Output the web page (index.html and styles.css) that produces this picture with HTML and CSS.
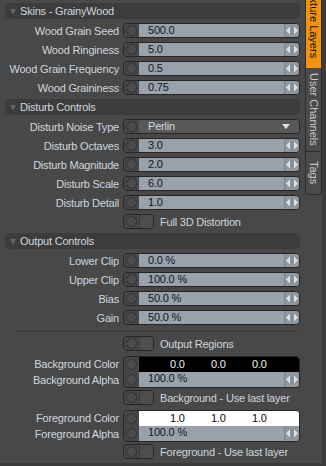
FILE: index.html
```html
<!DOCTYPE html>
<html lang="en">
<head>
    <meta charset="UTF-8">
    <title>Skins - GrainyWood</title>
    <link rel="stylesheet" href="styles.css">
</head>
<body>
    <div class="window">
        <div class="panel">
            <!-- Skins -->
            <div class="group-head"><span class="caret"></span>Skins - GrainyWood</div>
            <div class="row">
                <span class="label">Wood Grain Seed</span>
                <div class="field"><span class="knob"><i></i></span><span class="value">500.0</span><span class="spin"><svg width="12" height="9" viewBox="0 0 12 9"><polygon points="0,4.5 4,0.5 4,8.5"/><rect x="5.5" y="0" width="1" height="9" class="bar"/><polygon points="8,0.5 12,4.5 8,8.5"/></svg></span></div>
            </div>
            <div class="row">
                <span class="label">Wood Ringiness</span>
                <div class="field"><span class="knob"><i></i></span><span class="value">5.0</span><span class="spin"><svg width="12" height="9" viewBox="0 0 12 9"><polygon points="0,4.5 4,0.5 4,8.5"/><rect x="5.5" y="0" width="1" height="9" class="bar"/><polygon points="8,0.5 12,4.5 8,8.5"/></svg></span></div>
            </div>
            <div class="row">
                <span class="label">Wood Grain Frequency</span>
                <div class="field"><span class="knob"><i></i></span><span class="value">0.5</span><span class="spin"><svg width="12" height="9" viewBox="0 0 12 9"><polygon points="0,4.5 4,0.5 4,8.5"/><rect x="5.5" y="0" width="1" height="9" class="bar"/><polygon points="8,0.5 12,4.5 8,8.5"/></svg></span></div>
            </div>
            <div class="row">
                <span class="label">Wood Graininess</span>
                <div class="field"><span class="knob"><i></i></span><span class="value">0.75</span><span class="spin"><svg width="12" height="9" viewBox="0 0 12 9"><polygon points="0,4.5 4,0.5 4,8.5"/><rect x="5.5" y="0" width="1" height="9" class="bar"/><polygon points="8,0.5 12,4.5 8,8.5"/></svg></span></div>
            </div>

            <!-- Disturb -->
            <div class="group-head"><span class="caret"></span>Disturb Controls</div>
            <div class="row">
                <span class="label">Disturb Noise Type</span>
                <div class="field dropdown"><span class="knob"><i></i></span><span class="value">Perlin</span><span class="drop-arrow"></span></div>
            </div>
            <div class="row">
                <span class="label">Disturb Octaves</span>
                <div class="field"><span class="knob"><i></i></span><span class="value">3.0</span><span class="spin"><svg width="12" height="9" viewBox="0 0 12 9"><polygon points="0,4.5 4,0.5 4,8.5"/><rect x="5.5" y="0" width="1" height="9" class="bar"/><polygon points="8,0.5 12,4.5 8,8.5"/></svg></span></div>
            </div>
            <div class="row">
                <span class="label">Disturb Magnitude</span>
                <div class="field"><span class="knob"><i></i></span><span class="value">2.0</span><span class="spin"><svg width="12" height="9" viewBox="0 0 12 9"><polygon points="0,4.5 4,0.5 4,8.5"/><rect x="5.5" y="0" width="1" height="9" class="bar"/><polygon points="8,0.5 12,4.5 8,8.5"/></svg></span></div>
            </div>
            <div class="row">
                <span class="label">Disturb Scale</span>
                <div class="field"><span class="knob"><i></i></span><span class="value">6.0</span><span class="spin"><svg width="12" height="9" viewBox="0 0 12 9"><polygon points="0,4.5 4,0.5 4,8.5"/><rect x="5.5" y="0" width="1" height="9" class="bar"/><polygon points="8,0.5 12,4.5 8,8.5"/></svg></span></div>
            </div>
            <div class="row">
                <span class="label">Disturb Detail</span>
                <div class="field"><span class="knob"><i></i></span><span class="value">1.0</span><span class="spin"><svg width="12" height="9" viewBox="0 0 12 9"><polygon points="0,4.5 4,0.5 4,8.5"/><rect x="5.5" y="0" width="1" height="9" class="bar"/><polygon points="8,0.5 12,4.5 8,8.5"/></svg></span></div>
            </div>
            <div class="row">
                <span></span>
                <div class="check"><span class="check-box"><span class="knob"><i></i></span><span class="check-fill"></span></span>Full 3D Distortion</div>
            </div>

            <!-- Output -->
            <div class="group-head"><span class="caret"></span>Output Controls</div>
            <div class="row">
                <span class="label">Lower Clip</span>
                <div class="field"><span class="knob"><i></i></span><span class="value">0.0 %</span><span class="spin"><svg width="12" height="9" viewBox="0 0 12 9"><polygon points="0,4.5 4,0.5 4,8.5"/><rect x="5.5" y="0" width="1" height="9" class="bar"/><polygon points="8,0.5 12,4.5 8,8.5"/></svg></span></div>
            </div>
            <div class="row">
                <span class="label">Upper Clip</span>
                <div class="field"><span class="knob"><i></i></span><span class="value">100.0 %</span><span class="spin"><svg width="12" height="9" viewBox="0 0 12 9"><polygon points="0,4.5 4,0.5 4,8.5"/><rect x="5.5" y="0" width="1" height="9" class="bar"/><polygon points="8,0.5 12,4.5 8,8.5"/></svg></span></div>
            </div>
            <div class="row">
                <span class="label">Bias</span>
                <div class="field"><span class="knob"><i></i></span><span class="value">50.0 %</span><span class="spin"><svg width="12" height="9" viewBox="0 0 12 9"><polygon points="0,4.5 4,0.5 4,8.5"/><rect x="5.5" y="0" width="1" height="9" class="bar"/><polygon points="8,0.5 12,4.5 8,8.5"/></svg></span></div>
            </div>
            <div class="row">
                <span class="label">Gain</span>
                <div class="field"><span class="knob"><i></i></span><span class="value">50.0 %</span><span class="spin"><svg width="12" height="9" viewBox="0 0 12 9"><polygon points="0,4.5 4,0.5 4,8.5"/><rect x="5.5" y="0" width="1" height="9" class="bar"/><polygon points="8,0.5 12,4.5 8,8.5"/></svg></span></div>
            </div>

            <div class="divider"></div>

            <div class="row">
                <span></span>
                <div class="check"><span class="check-box"><span class="knob"><i></i></span><span class="check-fill"></span></span>Output Regions</div>
            </div>

            <div class="color-group">
                <div class="color-labels"><span>Background Color</span><span>Background Alpha</span></div>
                <div class="color-field">
                    <div class="knob-col"><span class="knob"><i></i></span><span class="knob"><i></i></span></div>
                    <div class="color-main">
                        <div class="swatch swatch-black"><span>0.0</span><span>0.0</span><span>0.0</span></div>
                        <div class="alpha"><span class="value">100.0 %</span><span class="spin"><svg width="12" height="9" viewBox="0 0 12 9"><polygon points="0,4.5 4,0.5 4,8.5"/><rect x="5.5" y="0" width="1" height="9" class="bar"/><polygon points="8,0.5 12,4.5 8,8.5"/></svg></span></div>
                    </div>
                </div>
            </div>
            <div class="row">
                <span></span>
                <div class="check"><span class="check-box"><span class="knob"><i></i></span><span class="check-fill"></span></span>Background - Use last layer</div>
            </div>

            <div class="color-group">
                <div class="color-labels"><span>Foreground Color</span><span>Foreground Alpha</span></div>
                <div class="color-field">
                    <div class="knob-col"><span class="knob"><i></i></span><span class="knob"><i></i></span></div>
                    <div class="color-main">
                        <div class="swatch swatch-white"><span>1.0</span><span>1.0</span><span>1.0</span></div>
                        <div class="alpha"><span class="value">100.0 %</span><span class="spin"><svg width="12" height="9" viewBox="0 0 12 9"><polygon points="0,4.5 4,0.5 4,8.5"/><rect x="5.5" y="0" width="1" height="9" class="bar"/><polygon points="8,0.5 12,4.5 8,8.5"/></svg></span></div>
                    </div>
                </div>
            </div>
            <div class="row">
                <span></span>
                <div class="check"><span class="check-box"><span class="knob"><i></i></span><span class="check-fill"></span></span>Foreground - Use last layer</div>
            </div>
        </div>

        <!-- Side Tabs -->
        <div class="tabs">
            <div class="tab tab-active"><span>Texture Layers</span></div>
            <div class="tab"><span>User Channels</span></div>
            <div class="tab tab-last"><span>Tags</span></div>
        </div>
    </div>
</body>
</html>
```

FILE: styles.css
```css
/* General */
body {
    margin: 0;
    background: #3b3b3b;
    font-family: 'Liberation Sans', Arial, sans-serif;
    font-size: 11px;
    letter-spacing: -0.2px;
    color: #cfd6de;
}

.window {
    display: flex;
    width: 326px;
    height: 466px;
}

/* Properties Panel */
.panel {
    width: 305px;
    height: 463px;
    padding-top: 3px;
    box-sizing: border-box;
    background: #484848;
}

.group-head {
    display: flex;
    align-items: center;
    height: 16px;
    margin: 0 5px 2px 5px;
    background: #3c3c3c;
    border-radius: 5px;
}

.group-head + .row {
    margin-top: 0;
}

.row + .group-head {
    margin-top: 2px;
}

.caret {
    width: 0;
    height: 0;
    border-left: 3.5px solid transparent;
    border-right: 3.5px solid transparent;
    border-top: 6px solid #626262;
    margin: 1px 4px 0 5px;
}

.row {
    display: grid;
    grid-template-columns: 119px 177px;
    column-gap: 4px;
    align-items: center;
    height: 19px;
}

.label {
    text-align: right;
    white-space: nowrap;
}

/* Number Fields */
.field {
    display: flex;
    height: 15px;
    box-sizing: border-box;
    border: 1px solid #252525;
    border-radius: 4px;
    overflow: hidden;
}

.knob {
    display: flex;
    align-items: center;
    justify-content: center;
    width: 15px;
    flex: none;
    background: #464646;
}

.knob i {
    width: 9px;
    height: 9px;
    border: 1px solid #323232;
    border-radius: 50%;
    background: #4b4b4b;
}

.value {
    flex: 1;
    padding-left: 9px;
    line-height: 13px;
    background: #99a1ab;
    color: #10151f;
    white-space: nowrap;
}

.spin {
    display: flex;
    align-items: center;
    justify-content: center;
    width: 14px;
    flex: none;
    background: #8f979f;
    border-left: 1px solid #7a828a;
}

.spin svg {
    fill: #dde1e5;
}

.spin .bar {
    fill: #7a828a;
}

/* Dropdown */
.dropdown .value {
    background: #585858;
    color: #d3dae2;
}

.drop-arrow {
    width: 22px;
    flex: none;
    background: #585858;
    position: relative;
}

.drop-arrow::after {
    content: '';
    position: absolute;
    left: 5px;
    top: 4px;
    border-left: 4px solid transparent;
    border-right: 4px solid transparent;
    border-top: 5px solid #dfe3e8;
}

/* Checkboxes */
.check {
    display: flex;
    align-items: center;
    white-space: nowrap;
}

.check-box {
    display: flex;
    width: 31px;
    height: 15px;
    box-sizing: border-box;
    margin-right: 6px;
    border: 1px solid #252525;
    border-radius: 4px;
    overflow: hidden;
    background: #464646;
}

.check-fill {
    flex: 1;
    background: #4e4e4e;
    border-left: 1px solid #3c3c3c;
}

/* Divider */
.divider {
    height: 1px;
    margin: 4px 5px 1px 16px;
    background: #393939;
    border-bottom: 1px solid #4f4f4f;
}

/* Colour Fields */
.color-group {
    display: grid;
    grid-template-columns: 119px 177px;
    column-gap: 4px;
    margin-top: 3px;
}

.color-labels {
    display: grid;
    grid-template-rows: 16px 16px;
    align-items: center;
    text-align: right;
    white-space: nowrap;
}

.color-field {
    display: flex;
    height: 32px;
    box-sizing: border-box;
    border: 1px solid #252525;
    border-radius: 4px;
    overflow: hidden;
}

.knob-col {
    display: flex;
    flex-direction: column;
}

.knob-col .knob {
    flex: 1;
}

.color-main {
    flex: 1;
    display: flex;
    flex-direction: column;
}

.swatch {
    display: grid;
    grid-template-columns: 41px 41px 41px;
    height: 15px;
    padding-left: 31px;
    line-height: 15px;
}

.swatch-black {
    background: #000;
    color: #f2f2f2;
}

.swatch-white {
    background: #fff;
    color: #0a0a0a;
}

.alpha {
    flex: 1;
    display: flex;
}

/* Side Tabs */
.tabs {
    display: flex;
    flex-direction: column;
    width: 17px;
    height: 463px;
    background: #484848;
}

.tab {
    display: flex;
    flex-direction: column;
    align-items: center;
    justify-content: center;
    height: 83px;
    overflow: hidden;
    background: #4b4b4b;
    border-left: 1px solid #2d2d2d;
    border-right: 1px solid #2d2d2d;
    border-bottom: 1px solid #2d2d2d;
    color: #c3cad2;
}

.tab span {
    writing-mode: vertical-rl;
    white-space: nowrap;
    letter-spacing: 0;
}

.tab-active {
    justify-content: flex-end;
    height: 68px;
    padding-bottom: 10px;
    box-sizing: border-box;
    background: #f3920f;
    color: #111;
    border-bottom: none;
}

.tab-last {
    height: 42px;
    border-radius: 0 0 4px 4px;
}
```
